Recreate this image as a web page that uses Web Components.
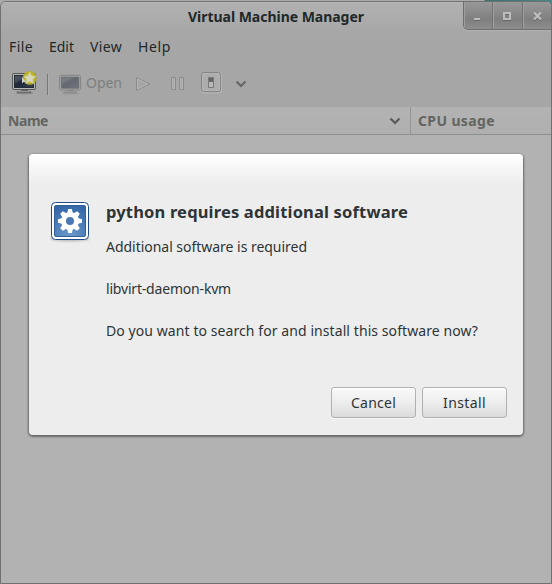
<!DOCTYPE html>
<html lang="en"><head><meta charset="utf-8"><title>Virtual Machine Manager</title>
<style>html,body{margin:0;width:552px;height:584px;overflow:hidden;background:#808080;font:14px/20px "Noto Sans","Open Sans",sans-serif;color:#20282a}</style>
</head><body>
<vm-window></vm-window>
<script>
const define=(name,html,setup)=>customElements.define(name,class extends HTMLElement{
  connectedCallback(){
    if(this.shadowRoot)return;
    this.attachShadow({mode:'open'}).innerHTML=html;
    if(setup)setup(this);
  }
});

// Single-line label whose tracking is adjusted to fill its width attribute.
define('ui-label',`<style>:host{display:block;white-space:nowrap;flex:none}span{display:inline-block}</style><span><slot></slot></span>`,el=>{
  const w=+el.getAttribute('w'),s=el.shadowRoot.querySelector('span');
  el.style.width=w+'px';
  const n=el.textContent.length;
  s.style.letterSpacing=((w-s.getBoundingClientRect().width)/n)+'px';
});

define('window-controls',`<style>
:host{position:absolute;right:1px;top:2px;display:flex;width:87px;height:27px;border-left:1px solid #6f6f6f;border-bottom:1px solid #6e6e6e;border-radius:0 0 0 5px;background:linear-gradient(#989898,#8b8b8b 35%,#7f7f7f 65%,#8d8d8d);box-shadow:0 1px #b2b2b2;overflow:hidden;box-sizing:content-box}
div{flex:1;box-shadow:inset 1px 0 #9f9f9f}div+div{border-left:1px solid #727272}svg{display:block}
</style>
<div><svg width="28" height="27"><path d="M10 18.500h6" stroke="#666"/><path d="M10 17h6" stroke="#bdbdbd" stroke-width="2"/></svg></div>
<div><svg width="28" height="27" fill="none" stroke-width="2"><path d="M11 12h6v6h-6z" stroke="#666"/><path d="M11 11h6v6h-6z" stroke="#bdbdbd"/></svg></div>
<div><svg width="28" height="27" fill="none" stroke-width="2.400"><path d="M11 11.500l7 7m0-7l-7 7" stroke="#666"/><path d="M11 10.500l7 7m0-7l-7 7" stroke="#bdbdbd"/></svg></div>`);

define('title-bar',`<style>
:host{display:flex;justify-content:center;height:34px;background:linear-gradient(#b1b1b1,#a6a6a6 96%);font-weight:700;box-shadow:inset 0 1px #b9b9b9;position:relative}
ui-label{margin-top:5px}
</style><ui-label w="176">Virtual Machine Manager</ui-label>`);

define('menu-bar',`<style>:host{display:flex;height:30px;padding:1px 0 0 8px;gap:16px;box-sizing:border-box}</style>
<ui-label w="24">File</ui-label><ui-label w="25">Edit</ui-label><ui-label w="32">View</ui-label><ui-label w="33">Help</ui-label>`);

define('monitor-icon',`<style>:host{display:block;flex:none}:host([dim]){opacity:.48}:host([dim]) svg{width:24px;height:22px;padding-top:2px}:host(:not([new])) .star{display:none}svg{display:block}</style>
<svg width="26" height="24" viewBox="0 0 26 24">
<defs><linearGradient id="s" x2="1" y2="1"><stop stop-color="#3b4352"/><stop offset=".5" stop-color="#20283a"/><stop offset="1" stop-color="#38445a"/></linearGradient>
<radialGradient id="g"><stop offset=".55" stop-color="#c4bd25"/><stop offset=".85" stop-color="#b8ae20" stop-opacity=".9"/><stop offset="1" stop-color="#aaa228" stop-opacity="0"/></radialGradient></defs>
<ellipse cx="12.500" cy="22" rx="9" ry="1.500" fill="#555" opacity=".35"/>
<path d="M9 18h7v2h3v2H5v-2h4z" fill="#686a67"/><path d="M6 20.500h12" stroke="#959595"/>
<rect x=".5" y="2.500" width="23" height="16" rx="1.500" fill="#b8b9b6" stroke="#555753"/>
<rect x="2.500" y="4.500" width="19" height="12" fill="url(#s)" stroke="#242b33"/>
<path d="M3 5h13L3 12z" fill="#fff" opacity=".12"/>
<g class="star"><circle cx="17.700" cy="7" r="7.500" fill="url(#g)"/><path d="M17.700 1l1.700 4 4.300.4-3.200 2.900.9 4.200-3.700-2.200-3.700 2.200.9-4.200-3.200-2.900 4.300-.4z" fill="#d6d6bd" stroke="#d0d0a2" stroke-width=".6"/><path d="M10 6l4 4.500-2.500.5-1.500 1.500z" fill="#d0d0cc"/></g>
</svg>`);

define('tool-bar',`<style>
:host{display:flex;align-items:flex-start;height:41px;padding:5px 0 0 11px;box-sizing:border-box;color:#7c7f7f}
.sep{width:1px;height:21px;margin:3px 11px 0 9px;background:#777;box-shadow:1px 0 #afafaf}
ui-label{margin:2px 0 0 3px}svg{display:block;flex:none}
</style>
<monitor-icon new></monitor-icon><div class="sep"></div><monitor-icon dim></monitor-icon><ui-label w="36">Open</ui-label>
<svg width="132" height="26" viewBox="0 0 132 26" fill="none">
<path d="M14.500 6.500v13l13-6.500z" stroke="#8b8b8b"/><path d="M15.500 8v10l10-5z" stroke="#b5b5b5"/>
<path d="M49.500 6.500h4v12h-4zM57.500 6.500h4v12h-4z" stroke="#8b8b8b"/><path d="M50.500 7.500h2v10h-2zM58.500 7.500h2v10h-2z" stroke="#b3b3b3"/>
<g transform="translate(0 -1)"><rect x="79.500" y="3" width="20" height="20" rx="2" stroke="#b5b5b5"/>
<rect x="79.500" y="2.500" width="19" height="19" rx="2" fill="#adadad" stroke="#858585"/><rect x="80.500" y="3.500" width="17" height="17" rx="1.500" stroke="#b5b5b5"/>
<rect x="86" y="7" width="6" height="11" rx="1" fill="#777"/><path d="M87 8h4v4h-4z" fill="#666"/><path d="M87 12h4v5h-4z" fill="#b8b8b8"/></g>
<path d="M114.500 10.500l4.500 4.500 4.500-4.500" stroke="#666" stroke-width="2.200"/>
</svg>`);

define('column-headers',`<style>
:host{display:flex;height:28px;box-sizing:border-box;border-bottom:1px solid #8e8e8e;background:linear-gradient(#b3b3b3,#afafaf);color:#636561;font-weight:700}
.name{width:410px;padding:4px 9px 0 7px;box-sizing:border-box;display:flex;justify-content:space-between;border-right:1px solid #959595}
.cpu{padding:4px 0 0 7px}svg{margin-top:4px}
</style><div class="name"><ui-label w="40">Name</ui-label><svg width="12" height="12" fill="none"><path d="M1.500 3.500l4.500 4.500 4.500-4.500" stroke="#5a5b58" stroke-width="2.200"/></svg></div><div class="cpu"><ui-label w="77">CPU usage</ui-label></div>`);

define('gear-icon',`<style>:host{display:block;flex:none}svg{display:block}</style>
<svg width="42" height="44" viewBox="0 0 42 44"><defs><radialGradient id="b" cx=".5" cy="1" r="1"><stop stop-color="#6c9acb"/><stop offset="1" stop-color="#3567a8"/></radialGradient><filter id="soft"><feGaussianBlur stdDeviation="1"/></filter></defs>
<ellipse cx="21" cy="38.500" rx="19.500" ry="3" fill="#777" opacity=".45" filter="url(#soft)"/>
<rect x="2.500" y="2.500" width="37" height="37" rx="4" fill="#fff" stroke="#204a87"/>
<rect x="5.500" y="5.500" width="31" height="31" rx="1.500" fill="url(#b)" stroke="#346099"/>
<g transform="translate(21 21)"><g fill="#fff"><circle r="9"/><g id="t"><path d="M-2.800-8L-1.800-12H1.800L2.800-8zM-2.800 8L-1.800 12H1.800L2.800 8z"/><path d="M-2.800-8L-1.800-12H1.800L2.800-8zM-2.800 8L-1.800 12H1.800L2.800 8z" transform="rotate(90)"/></g><use href="#t" transform="rotate(45)"/></g><circle r="4" fill="#4979b5"/></g></svg>`);

define('ui-button',`<style>:host{display:flex;justify-content:center;width:85px;height:31px;box-sizing:border-box;border:1px solid #b0b0b0;border-radius:3px;background:linear-gradient(#f9f9f9,#ededed 50%,#dbdbdb);box-shadow:inset 0 1px #fff,0 1px #f7f7f7;padding-top:5px}</style><slot></slot>`);

define('message-dialog',`<style>
:host{position:absolute;left:29px;top:154px;width:494px;height:281px;box-sizing:border-box;border-radius:4px;background:linear-gradient(#fff,#ededed 31px);box-shadow:0 1px 2px 1px rgba(0,0,0,.42);display:flex;flex-direction:column;justify-content:space-between;padding:46px 16px 17px 20px;color:#2e3436}
.body{display:flex;gap:15px}.copy{display:flex;flex-direction:column}
.heading{font-size:16.500px;font-weight:700;line-height:24px;margin-bottom:13px}
p{margin:0 0 22px}
.actions{display:flex;justify-content:flex-end;gap:6px}
</style>
<div class="body"><gear-icon></gear-icon><div class="copy"><ui-label class="heading" w="302">python requires additional software</ui-label>
<p><ui-label w="201">Additional software is required</ui-label></p><p><ui-label w="125">libvirt-daemon-kvm</ui-label></p><p><ui-label w="372">Do you want to search for and install this software now?</ui-label></p></div></div>
<div class="actions"><ui-button><ui-label w="45">Cancel</ui-label></ui-button><ui-button><ui-label w="43">Install</ui-label></ui-button></div>`);

define('vm-window',`<style>
:host{display:block;position:relative;width:552px;height:584px;box-sizing:border-box;background:linear-gradient(90deg,#aaa 484px,#397274 485px,#4c8585) 0 0/100% 8px no-repeat,#aaa}
.frame{height:583px;box-sizing:border-box;border:1px solid #707070;border-radius:6px 6px 0 0;background:#b2b2b2;overflow:hidden;display:flex;flex-direction:column}
.outer{padding-top:1px}.chrome{background:#a6a6a6}
window-controls{border-top-right-radius:5px}
</style><div class="outer"><div class="frame"><div class="chrome"><title-bar></title-bar><menu-bar></menu-bar><tool-bar></tool-bar></div><column-headers></column-headers></div></div><window-controls></window-controls><message-dialog></message-dialog>`);
</script>
</body></html>
